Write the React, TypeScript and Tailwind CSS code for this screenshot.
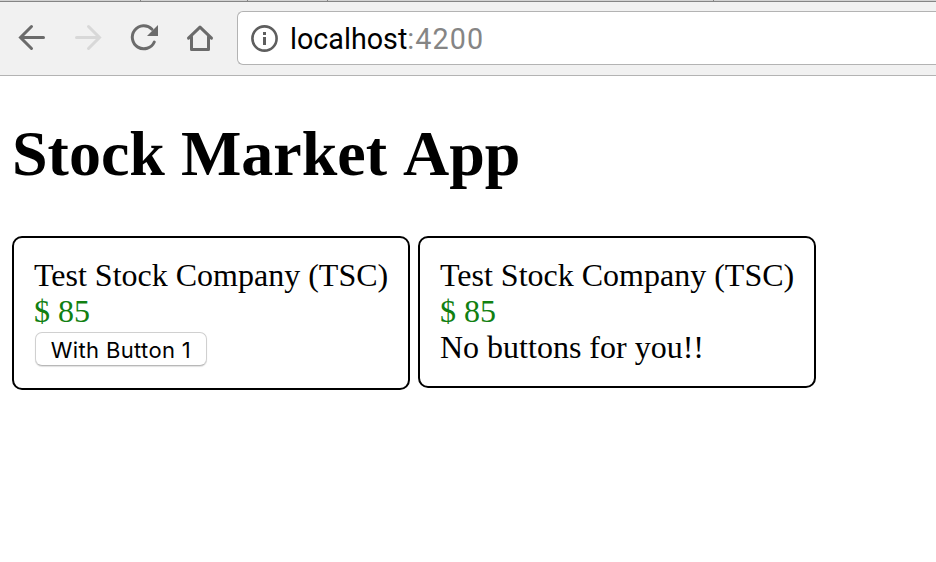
import type { ReactNode } from "react";

function Toolbar() {
  return (
    <header className="h-[76px] bg-[#f1f1f1] border-b border-[#b3b3b3] flex flex-col">
      <div className="h-[2px] shrink-0 bg-[#d2d2d2] border-b border-[#858585] flex">
        <span className="w-px h-px ml-[140px] bg-[#858585]" />
        <span className="w-px h-px ml-[106px] bg-[#858585]" />
        <span className="w-px h-px ml-[79px] bg-[#858585]" />
        <span className="w-px h-px ml-[385px] bg-[#858585]" />
      </div>
      <div className="flex mt-[9px]">
        <svg className="w-[237px] h-[54px] shrink-0" viewBox="0 11 237 54" fill="none" strokeWidth="3" strokeLinecap="round">
          <g stroke="#6b6b6b">
            <path d="M43.5 37.5H21M31.5 26.5L20.5 37.5L31.5 48.5" />
            <path d="M154.3 42A11.5 11.5 0 1 1 152 29.2" />
            <path d="M188.5 38.2L200 27.2L211.5 38.2M191.5 36.5V49.5H208.5V36.5" strokeLinejoin="round" />
          </g>
          <path d="M158 25V36H147Z" fill="#6b6b6b" />
          <path d="M76.5 37.5H99M88.5 26.5L99.5 37.5L88.5 48.5" stroke="#d8d8d8" />
        </svg>
        <div className="flex-1 h-[54px] bg-white border border-r-0 border-[#b3b3b3] rounded-l-[6px] flex items-center pl-[13px]">
          <svg className="w-[27px] h-[27px] shrink-0" viewBox="0 0 27 27" fill="none">
            <circle cx="13.5" cy="13.5" r="12.1" stroke="#5e5e5e" strokeWidth="2.6" />
            <path d="M12 7h3v3h-3zM12 12h3v8h-3z" fill="#5e5e5e" />
          </svg>
          <span className="ml-[12px] pt-[2px] whitespace-nowrap font-['Roboto',sans-serif] text-[28.7px] leading-[36px] text-black">
            localhost<span className="text-[#858585] tracking-[1.1px]">:4200</span>
          </span>
        </div>
      </div>
    </header>
  );
}

function StockCard({ children }: { children: ReactNode }) {
  return (
    <section className="w-[398px] border-2 border-black rounded-[10px] px-[20px] pt-[19px] pb-[21px] whitespace-nowrap text-[32px] leading-[36px]">
      <div>Test Stock Company (TSC)</div>
      <div className="text-[#118011]">$ 85</div>
      {children}
    </section>
  );
}

export default function App() {
  return (
    <div className="h-[562px] w-[936px] overflow-hidden bg-white text-black font-['Liberation_Serif',serif]">
      <Toolbar />
      <main className="px-[12px] pt-[41px]">
        <h1 className="font-bold text-[64px] leading-[74px] whitespace-nowrap">
          Stock Market <span className="inline-block">App</span>
        </h1>
        <div className="mt-[45px] flex items-start gap-[8px]">
          <StockCard>
            <div className="h-[38px] pt-[3px] pl-[1px]">
              <button className="block w-[172px] h-[34px] rounded-[7px] border border-[#d0d0d0] border-b-[#b8b8b8] bg-white shadow-[0_1px_1px_rgba(0,0,0,0.12)] text-center font-['Inter',sans-serif] text-[22px] tracking-[0.35px] leading-[34px]">
                With Button 1
              </button>
            </div>
          </StockCard>
          <StockCard>
            <div>No buttons for you!!</div>
          </StockCard>
        </div>
      </main>
    </div>
  );
}
